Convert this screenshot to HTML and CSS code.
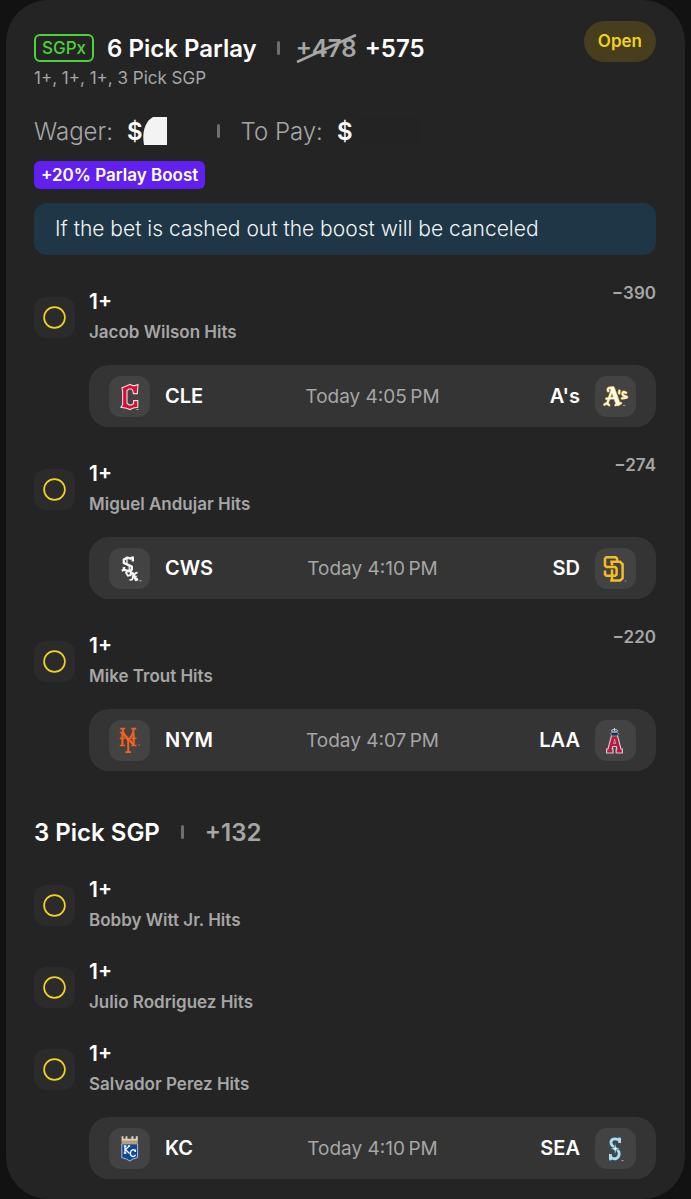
FILE: index.html
```html
<!DOCTYPE html>
<html lang="en">
<head>
<meta charset="utf-8">
<meta name="viewport" content="width=device-width, initial-scale=1">
<title>6 Pick Parlay</title>
<link rel="stylesheet" href="styles.css">
</head>
<body>
<svg class="defs" width="0" height="0" aria-hidden="true">
  <symbol id="pending" viewBox="0 0 41 41"><circle cx="20.5" cy="20.5" r="10.4" fill="none" stroke="#f2d21f" stroke-width="1.7"/></symbol>
</svg>
<main class="card">
  <header class="head">
    <div class="head-main">
      <div class="title-row">
        <span class="sgpx">SGPx</span>
        <h1 class="title">6 Pick Parlay</h1>
        <span class="bar"></span>
        <span class="odds-pair">
          <s class="old-odds">+478<svg class="slash" viewBox="0 0 60 28" preserveAspectRatio="none" aria-hidden="true"><path d="M1 27 59 1" stroke="#a6a6a6" stroke-width="2.6"/></svg></s>
          <strong class="new-odds">+575</strong>
        </span>
      </div>
      <p class="summary">1+, 1+, 1+, 3 Pick SGP</p>
    </div>
    <span class="status">Open</span>
  </header>

  <div class="money">
    <span class="money-item">Wager: <span class="amount">$<svg class="mask" viewBox="0 0 24 28" aria-hidden="true"><path d="M10 0H24V28H1C-1 17 1 5 10 0Z" fill="#f3f3f3"/></svg></span></span>
    <span class="bar thin"></span>
    <span class="money-item">To Pay: <span class="amount">$</span></span>
    <span class="hidden-sum"></span>
  </div>
  <span class="boost">+20% Parlay Boost</span>
  <p class="notice">If the bet is cashed out the boost will be canceled</p>

  <section class="legs">
    <article class="leg">
      <svg class="leg-icon"><use href="#pending"/></svg>
      <div class="leg-text"><h3 class="pick">1+</h3><p class="player">Jacob Wilson Hits</p></div>
      <span class="leg-odds">−390</span>
      <div class="game">
        <div class="team">
          <svg class="logo" viewBox="0 0 41 41" aria-hidden="true">
            <path d="M13 11.8 18.6 9.6 21 8.3 23.6 9.6H26L29 8.5 28.3 17.6H24.4L23.7 14.2 22.3 13H20L18 14.6V27.2L20 28.9H22.8L24.6 27.4V24.6H28.8V31.2L24.2 32 21 33.6 17.6 32.2 12 31.4 13.6 28.6V15.4Z" fill="#d80f35" stroke="#f2dede" stroke-width="1.1"/>
            <path d="M27.5 33.5h2" stroke="#bbb"/>
          </svg>
          <span>CLE</span>
        </div>
        <time class="when">Today 4:05&#8239;PM</time>
        <div class="team">
          <span>A's</span>
          <svg class="logo" viewBox="0 0 41 41" aria-hidden="true">
            <g fill="none" stroke-linecap="round" stroke-linejoin="round">
              <g stroke="#dcae3c">
                <path d="M17.5 12.6 23 27.6" stroke-width="5.2"/>
                <path d="M13.2 15C12 12.5 14 11 17.5 12.3M16.6 15 12.6 26.4M11.4 22.6 19 22M9.4 28.6Q12 26.3 14 29M20.6 29 25.8 27.2" stroke-width="2.9"/>
                <path d="M24.4 14.8 24.2 17.4M31 16.8Q27.7 15 27.5 17.4T30.8 20.6 27 22.4" stroke-width="2.9"/>
              </g>
              <g stroke="#fffdf2">
                <path d="M17.5 12.6 23 27.6" stroke-width="3.9"/>
                <path d="M13.2 15C12 12.5 14 11 17.5 12.3M16.6 15 12.6 26.4M11.4 22.6 19 22M9.4 28.6Q12 26.3 14 29M20.6 29 25.8 27.2" stroke-width="1.7"/>
                <path d="M24.4 14.8 24.2 17.4M31 16.8Q27.7 15 27.5 17.4T30.8 20.6 27 22.4" stroke-width="1.6"/>
              </g>
              <path d="M28.5 29.4h1.5" stroke="#c8a23c"/>
            </g>
          </svg>
        </div>
      </div>
    </article>

    <article class="leg">
      <svg class="leg-icon"><use href="#pending"/></svg>
      <div class="leg-text"><h3 class="pick">1+</h3><p class="player">Miguel Andujar Hits</p></div>
      <span class="leg-odds">−274</span>
      <div class="game">
        <div class="team">
          <svg class="logo" viewBox="0 0 41 41" aria-hidden="true">
            <g fill="none" stroke="#f4f4f4" stroke-linejoin="round">
              <path d="M23.8 13.4V9.4L21.5 10.6 18.4 9.6 14.8 11.6V14.8L22.8 18.6V21.6L19.2 23.2 15 21.6 12.8 22.8M15 19V22.6" stroke-width="2.4"/>
              <path d="M18 10.8V15.5M20.2 17.5V22" stroke-width="1.3"/>
              <path d="M19.2 22.5 17 24.6 18.8 27.8 21.6 27 22.2 24 19.6 22.6" stroke-width="1.9"/>
              <path d="M20.8 25.4 23.4 25 27 31.8 29 31" stroke-width="2.6"/>
              <path d="M28.6 24.6 26.4 25.2 23 31.6 20.4 31.8M22.8 28.6H27.8" stroke-width="1.8"/>
              <path d="M30.5 32.8h2" stroke-width="1" opacity=".7"/>
            </g>
          </svg>
          <span>CWS</span>
        </div>
        <time class="when">Today 4:10&#8239;PM</time>
        <div class="team">
          <span>SD</span>
          <svg class="logo" viewBox="0 0 41 41" aria-hidden="true">
            <g fill="none" stroke="#f5bd25" stroke-width="2.5" stroke-linejoin="miter">
              <path d="M22 13.8V10.6L20.6 9.2H11.4L10 10.6V17.6L11.4 19H20.2L21.6 20.4V26.4L20.2 27.8H11.4L10 26.4V22.6"/>
              <path d="M15.2 13.8H25.2L27.6 16.3V30.2L25.2 32.6H15.2M17 13.8V17.6M17 21.4V32.6"/>
            </g>
            <path d="M29.8 33h1.5" stroke="#d5a42d"/>
          </svg>
        </div>
      </div>
    </article>

    <article class="leg">
      <svg class="leg-icon"><use href="#pending"/></svg>
      <div class="leg-text"><h3 class="pick">1+</h3><p class="player">Mike Trout Hits</p></div>
      <span class="leg-odds">−220</span>
      <div class="game">
        <div class="team">
          <svg class="logo" viewBox="0 0 41 41" aria-hidden="true">
            <g fill="none" stroke="#f4621f">
              <path d="M13.4 12.5V25.4M24.6 12.5V25.4M13 12 25 25.2" stroke-width="2.2"/>
              <path d="M10.8 12.4h4M10.8 18q2.6 1.2 5 0M22.4 18q2.6 1.2 5 0M10.8 25.6h5.2M22.4 25.6h5" stroke-width="1.5"/>
              <path d="M13.6 9Q14.2 14.5 19.2 20.5V32M24.8 9Q24.2 14.5 19.2 20.5" stroke-width="2"/>
              <path d="M11.2 8.6h5M22.2 8.6h5M16.4 32.2h5.6" stroke-width="1.7"/>
              <path d="M29.4 25h1.5" stroke-width="1"/>
            </g>
          </svg>
          <span>NYM</span>
        </div>
        <time class="when">Today 4:07&#8239;PM</time>
        <div class="team">
          <span>LAA</span>
          <svg class="logo" viewBox="0 0 41 41" aria-hidden="true">
            <path d="M17.2 13H21.8L26 29H27.4V33H21.2V29H21.8L21.3 26.5H17.8L17.2 29H18V33H11.6V29H13Z" fill="#bf123c" stroke="#c5ced6" stroke-width="1.2"/>
            <path d="M18.5 23.6H20.7L19.6 19.2Z" fill="#434343" stroke="#d9dfe3" stroke-width=".6"/>
            <path d="M15.6 13.6 17.6 12H21.4L23.6 13.6 22.4 16H16.7Z" fill="#1c2f55" stroke="#aab7c1" stroke-width=".7"/>
            <ellipse cx="19.5" cy="10.8" rx="3.2" ry="1.3" fill="none" stroke="#c4ced6" stroke-width="1"/>
            <path d="M19.5 8v3" stroke="#c4ced6" stroke-width="1"/>
            <path d="M28.8 32.5h1.4" stroke="#bf123c"/>
          </svg>
        </div>
      </div>
    </article>
  </section>

  <div class="group-head">
    <h2 class="group-title">3 Pick SGP</h2>
    <span class="bar"></span>
    <span class="group-odds">+132</span>
  </div>

  <section class="legs tight">
    <article class="leg">
      <svg class="leg-icon"><use href="#pending"/></svg>
      <div class="leg-text"><h3 class="pick">1+</h3><p class="player">Bobby Witt Jr. Hits</p></div>
    </article>
    <article class="leg">
      <svg class="leg-icon"><use href="#pending"/></svg>
      <div class="leg-text"><h3 class="pick">1+</h3><p class="player">Julio Rodriguez Hits</p></div>
    </article>
    <article class="leg">
      <svg class="leg-icon"><use href="#pending"/></svg>
      <div class="leg-text"><h3 class="pick">1+</h3><p class="player">Salvador Perez Hits</p></div>
      <div class="game">
        <div class="team">
          <svg class="logo" viewBox="0 0 41 41" aria-hidden="true">
            <path d="M12.6 13V8.3H14.4V10.8H16.6V8.3H18.4V10.8H22.4V8.3H24.4V10.8H26.8V8.3H28.8V13Z" fill="#d9d3c8"/>
            <path d="M12.6 12.4H28.8V15.4H12.6Z" fill="#c89a55"/>
            <path d="M12.8 15.8H28.6V29.6L24 31 20.7 33 17.4 31 12.8 29.6Z" fill="#0d4a9c" stroke="#b9cbe0" stroke-width=".9"/>
            <g fill="none" stroke="#fff" stroke-width="1.3">
              <path d="M16 18V25M20.2 18 16.4 21.6 20.6 25.4M14.8 18h2.6M14.8 25h2.6M19 18h2.2"/>
              <path d="M26.2 23.4C25 20.6 21.4 21.6 21.4 25.2S25.2 29.6 26.6 26.8M26.4 21.4v2.6"/>
            </g>
          </svg>
          <span>KC</span>
        </div>
        <time class="when">Today 4:10&#8239;PM</time>
        <div class="team">
          <span>SEA</span>
          <svg class="logo" viewBox="0 0 41 41" aria-hidden="true">
            <g fill="none" stroke-linejoin="round">
              <path d="M24.6 15V10.8L22.8 11.6C19 9.8 15.8 11.6 16 15 16.2 19.8 24.2 19.8 24.2 25.8 24.2 30.6 19 31.8 16.8 29.8L15.4 31V26" stroke="#12586f" stroke-width="4.6"/>
              <path d="M24.6 15V10.8L22.8 11.6C19 9.8 15.8 11.6 16 15 16.2 19.8 24.2 19.8 24.2 25.8 24.2 30.6 19 31.8 16.8 29.8L15.4 31V26" stroke="#c3d6df" stroke-width="2.8"/>
              <path d="M20.2 14.8 21.2 19.6 25 20.8 21.2 22 20.2 27 19.2 22 15.4 20.8 19.2 19.6Z" fill="#e8f0f3" stroke="#12586f" stroke-width=".6"/>
              <path d="M26.5 32.6h2" stroke="#aaa"/>
            </g>
          </svg>
        </div>
      </div>
    </article>
  </section>
</main>
</body>
</html>
```
FILE: styles.css
```css
* { box-sizing: border-box; }

body {
  margin: 0;
  background: #121212;
  color: #fff;
  font-family: Inter, "Liberation Sans", sans-serif;
}

h1, h2, h3, p { margin: 0; }

.defs { position: absolute; }

.card {
  margin: 0 6px;
  padding: 20px 29px 20px 28px;
  background: #242424;
  border-radius: 42px;
}

.head {
  display: flex;
  justify-content: space-between;
  align-items: flex-start;
}

.head-main { padding-top: 14px; }

.title-row {
  display: flex;
  align-items: center;
  height: 28px;
}

.sgpx {
  padding: 0 6px;
  border: 2px solid #4bd13a;
  border-radius: 6px;
  color: #4bd13a;
  font-size: 17px;
  font-weight: 500;
  line-height: 24px;
}

.title {
  margin-left: 13px;
  font-size: 24px;
  font-weight: 600;
}

.bar {
  width: 3px;
  height: 14px;
  margin: 0 16px 0 20px;
  border-radius: 2px;
  background: #6e6e6e;
}

.odds-pair {
  display: flex;
  gap: 8px;
  font-size: 24px;
  font-weight: 600;
}

.old-odds {
  position: relative;
  color: #a6a6a6;
  text-decoration: none;
}

.slash {
  position: absolute;
  left: 0;
  top: 0;
  width: 100%;
  height: 100%;
}

.new-odds { font-weight: 600; }

.summary {
  color: #a6a6a6;
  font-size: 17px;
  line-height: 32px;
}

.status {
  margin-top: 1px;
  padding: 0 14px;
  border-radius: 21px;
  background: #463e1d;
  color: #f2d21f;
  font-size: 17px;
  font-weight: 600;
  line-height: 41px;
}

.money {
  display: flex;
  align-items: center;
  height: 28px;
  margin-top: 23px;
  font-size: 24px;
  color: #a6a6a6;
}

.money-item {
  display: flex;
  align-items: center;
  gap: 14px;
  font-weight: 300;
}

.amount {
  display: flex;
  align-items: center;
  color: #fff;
  font-weight: 600;
}

.mask {
  width: 24px;
  height: 28px;
}

.bar.thin { margin: 0 21px 0 50px; }

.hidden-sum {
  width: 60px;
  height: 28px;
  margin-left: 7px;
  background: #232323;
}

.boost {
  display: block;
  width: fit-content;
  margin-top: 16px;
  padding: 0 7px;
  border-radius: 6px;
  background: #611ff0;
  font-size: 17px;
  font-weight: 600;
  line-height: 28px;
}

.notice {
  margin-top: 14px;
  padding: 0 21px;
  border-radius: 13px;
  background: #1e3645;
  color: #f1f5f7;
  font-size: 21px;
  font-weight: 300;
  line-height: 52px;
}

.legs {
  display: grid;
  gap: 32px;
  margin-top: 32px;
}

.legs.tight {
  gap: 22px;
  margin-top: 28px;
}

.leg {
  display: grid;
  grid-template-columns: 41px 1fr auto;
  column-gap: 14px;
  align-items: center;
}

.leg-icon {
  width: 41px;
  height: 41px;
  border-radius: 12px;
  background: #2b2b2b;
}

.pick {
  font-size: 21px;
  font-weight: 600;
  line-height: 30px;
}

.player {
  color: #a6a6a6;
  font-size: 17px;
  font-weight: 600;
  line-height: 30px;
}

.leg-odds {
  align-self: start;
  color: #a6a6a6;
  font-size: 17px;
  font-weight: 600;
  line-height: 12px;
}

.game {
  grid-column: 2 / -1;
  display: grid;
  grid-template-columns: 1fr auto 1fr;
  align-items: center;
  height: 62px;
  margin-top: 18px;
  padding: 0 20px;
  border-radius: 20px;
  background: #343434;
}

.team {
  display: flex;
  align-items: center;
  gap: 15px;
  font-size: 20px;
  font-weight: 600;
}

.team:last-child { justify-content: flex-end; }

.logo {
  width: 41px;
  height: 41px;
  border-radius: 12px;
  background: #434343;
}

.when {
  color: #a6a6a6;
  font-size: 19px;
}

.group-head {
  display: flex;
  align-items: center;
  height: 30px;
  margin-top: 46px;
  font-size: 24px;
  font-weight: 600;
}

.group-head .bar { margin: 0 21px; }

.group-title {
  font-size: 24px;
  font-weight: 600;
}

.group-odds { color: #a6a6a6; }
```
